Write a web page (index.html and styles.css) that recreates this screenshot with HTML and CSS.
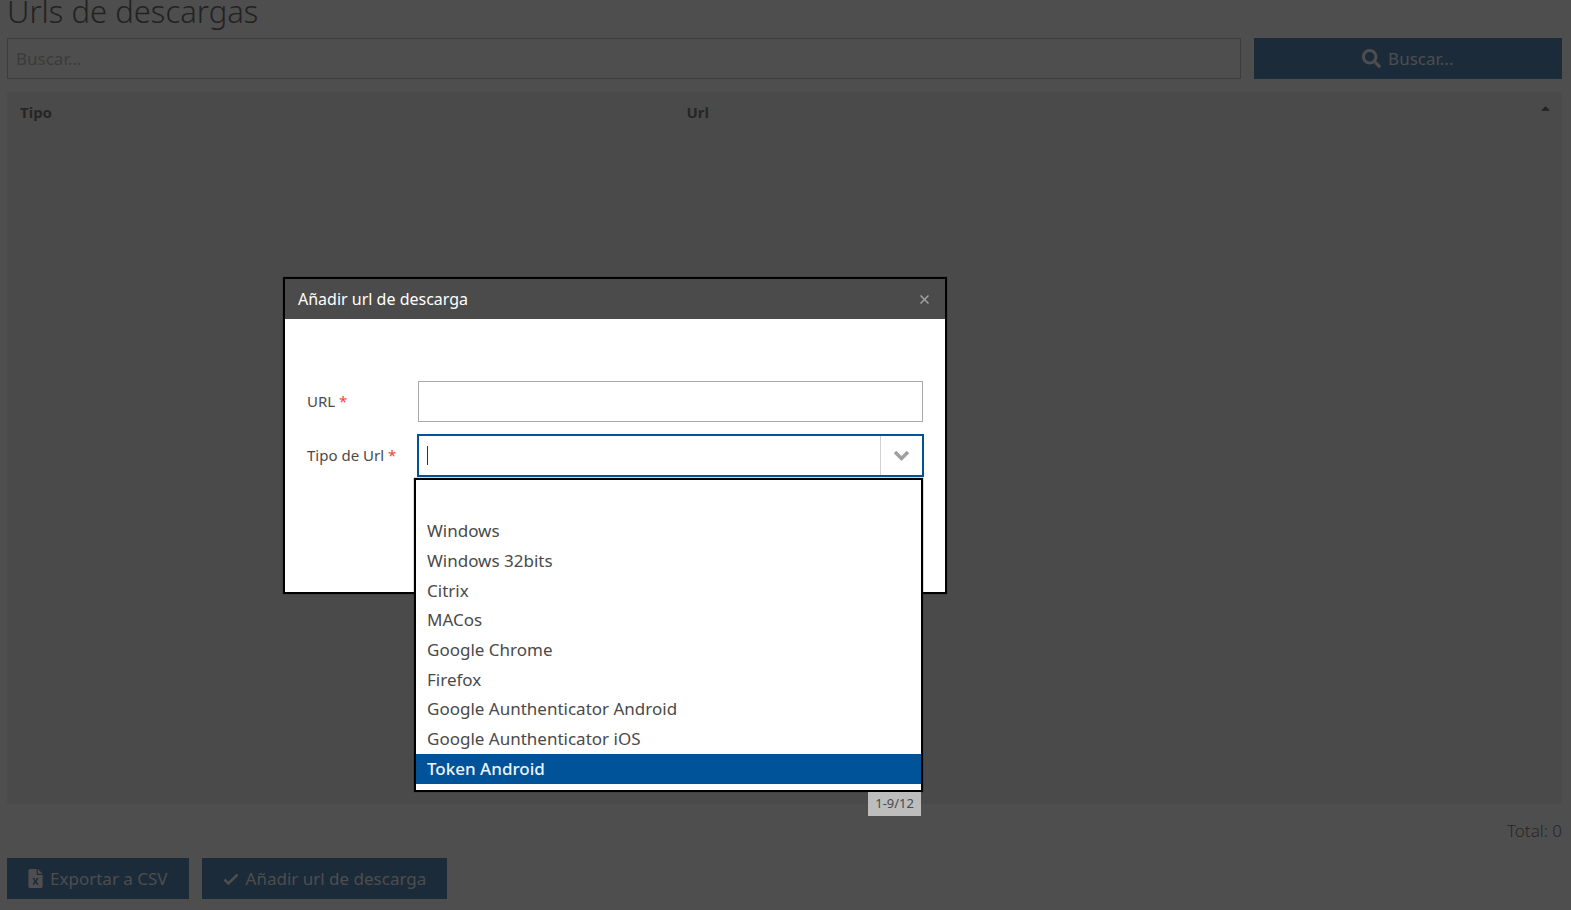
FILE: index.html
```html
<!DOCTYPE html>
<html lang="es">
<head>
<meta charset="utf-8">
<title>Urls de descargas</title>
<link rel="stylesheet" href="styles.css">
</head>
<body>
<main class="page">
  <h1 class="title">Urls de descargas</h1>
  <form class="search">
    <input class="search-input" type="search" placeholder="Buscar..." aria-label="Buscar">
    <button class="btn" type="button">
      <svg class="icon-search" viewBox="0 0 512 512" aria-hidden="true"><path d="M505 443L405 343c-4-4-11-7-17-7h-16c28-35 44-80 44-128C416 93 323 0 208 0S0 93 0 208s93 208 208 208c48 0 93-16 128-44v16c0 6 3 13 7 17l100 100c9 9 24 9 34 0l28-28c9-10 9-25 0-34zM208 336c-71 0-128-57-128-128S137 80 208 80s128 57 128 128-57 128-128 128z"/></svg>
      Buscar...
    </button>
  </form>
  <section class="grid">
    <table class="grid-table">
      <thead>
        <tr><th class="col-type" scope="col">Tipo</th><th scope="col" aria-sort="ascending"><span class="sortable">Url<svg class="icon-sort" viewBox="0 0 10 5" aria-hidden="true"><path d="M0 5L5 0l5 5z"/></svg></span></th></tr>
      </thead>
    </table>
  </section>
  <p class="total">Total: 0</p>
  <footer class="actions">
    <button class="btn" type="button">
      <svg class="icon-file" viewBox="0 0 384 512" aria-hidden="true"><path fill-rule="evenodd" d="M48 0h176v136c0 13 11 24 24 24h136v304c0 26-22 48-48 48H48c-26 0-48-22-48-48V48C0 22 22 0 48 0zM256 0l128 128H256zM108 240l56 92-56 92h48l36-62 36 62h48l-56-92 56-92h-48l-36 62-36-62z"/></svg>
      Exportar a CSV
    </button>
    <button class="btn" type="button">
      <svg class="icon-check" viewBox="0 0 16 12" aria-hidden="true"><path d="M1.500 6.500L5.500 10.500 14.500 1.500"/></svg>
      Añadir url de descarga
    </button>
  </footer>
</main>

<div class="dialog" role="dialog" aria-labelledby="dialog-title">
  <header class="dialog-header">
    <h2 class="dialog-title" id="dialog-title">Añadir url de descarga</h2>
    <button class="close" type="button" aria-label="Cerrar"><svg class="icon-close" viewBox="0 0 9 9" aria-hidden="true"><path d="M.5.5l8 8M8.500.5l-8 8"/></svg></button>
  </header>
  <form class="dialog-form">
    <label class="label" for="url">URL <span class="required">*</span></label>
    <input class="field" id="url" type="text">
    <label class="label" for="type">Tipo de Url <span class="required">*</span></label>
    <div class="combo">
      <input class="combo-input" id="type" type="text" role="combobox" aria-expanded="true" aria-controls="type-list">
      <span class="caret"></span>
      <button class="combo-button" type="button" aria-label="Abrir lista"><svg class="icon-chevron" viewBox="0 0 17 11" aria-hidden="true"><path d="M2 2l6.500 6.500L15 2"/></svg></button>
      <div class="popup">
        <ul class="options" id="type-list" role="listbox">
          <li class="option" role="option">Windows</li>
          <li class="option" role="option">Windows 32bits</li>
          <li class="option" role="option">Citrix</li>
          <li class="option" role="option">MACos</li>
          <li class="option" role="option">Google Chrome</li>
          <li class="option" role="option">Firefox</li>
          <li class="option" role="option">Google Aunthenticator Android</li>
          <li class="option" role="option">Google Aunthenticator iOS</li>
          <li class="option selected" role="option" aria-selected="true">Token Android</li>
        </ul>
        <span class="range">1-9/12</span>
      </div>
    </div>
  </form>
</div>
</body>
</html>
```

FILE: styles.css
```css
* { box-sizing: border-box; }

body {
  margin: 0;
  background: #4e4e4e;
  color: #262626;
  font-family: "Noto Sans", "Open Sans", sans-serif;
  font-size: 17px;
  overflow: hidden;
}

button, input { font: inherit; border-radius: 0; }

.page {
  display: flex;
  flex-direction: column;
  height: 100vh;
  padding: 0 9px 11px 7px;
}

.title {
  margin: -14px 0 2px;
  font-size: 31px;
  font-weight: 300;
  line-height: 50px;
  color: #222;
}

.search {
  display: grid;
  grid-template-columns: 4fr 1fr;
  gap: 13px;
}

.search-input {
  min-width: 0;
  height: 41px;
  padding: 0 8px;
  border: 1px solid #3d3d3d;
  background: transparent;
  color: #262626;
  appearance: none;
}

.search-input::placeholder { color: #3b3b3b; opacity: 1; }

.btn {
  display: flex;
  align-items: center;
  justify-content: center;
  gap: 7px;
  height: 41px;
  padding: 0 21px;
  border: 0;
  background: #1c2b3a;
  color: #4e4e4e;
}

.btn svg { fill: currentColor; }
.icon-search { width: 19px; height: 19px; }
.icon-file { width: 15px; height: 19px; }
.btn .icon-check { width: 16px; height: 12px; fill: none; stroke: currentColor; stroke-width: 2.500; }

.grid {
  flex: 1;
  margin-top: 13px;
  background: #4a4a4a;
}

.grid-table { width: 100%; border-collapse: collapse; table-layout: fixed; }
.grid-table th { padding: 8px 12px 8px 13px; font-size: 15px; line-height: 24px; text-align: left; }
.col-type { width: calc(100% * 3 / 7); }
.sortable { display: flex; justify-content: space-between; }
.icon-sort { width: 9px; height: 5px; margin-top: 6px; fill: #222; }

.total { margin: 14px 0 15px; line-height: 25px; text-align: right; font-weight: 300; }
.actions { display: flex; gap: 13px; }

.dialog {
  position: absolute;
  top: 277px;
  left: 283px;
  width: 664px;
  height: 317px;
  border: 2px solid #000;
  background: #fff;
  color: #4a4a4a;
  box-shadow: 0 0 1px #222;
}

.dialog-header {
  display: flex;
  align-items: center;
  justify-content: space-between;
  height: 40px;
  padding: 0 13px;
  background: #4b4b4b;
}

.dialog-title { margin: 0; font-size: 16px; font-weight: 400; color: #fff; }

.close {
  display: flex;
  padding: 3px;
  border: 0;
  background: none;
}

.icon-close { width: 9px; height: 9px; fill: none; stroke: #a0a0a0; stroke-width: 1.500; }

.dialog-form {
  display: grid;
  grid-template-columns: 110px 1fr;
  align-items: center;
  row-gap: 13px;
  padding: 62px 22px 0;
}

.label { padding-bottom: 2px; font-size: 15px; }
.required { color: #f44336; }

.field {
  min-width: 0;
  height: 41px;
  margin-left: 1px;
  padding: 0 8px;
  border: 1px solid #aaa;
  background: #fff;
}

.combo {
  position: relative;
  display: flex;
  height: 43px;
  margin: -1px -1px 0 0;
  border: 2px solid #005299;
}

.combo-input { flex: 1; min-width: 0; padding: 0 8px; border: 0; background: none; }

.caret {
  position: absolute;
  top: 10px;
  left: 8px;
  width: 1px;
  height: 19px;
  background: #333;
}

.combo-button {
  display: flex;
  align-items: center;
  justify-content: center;
  width: 42px;
  padding: 0;
  border: 0;
  border-left: 1px solid #d0d0d0;
  background: none;
}

.icon-chevron { width: 17px; height: 11px; fill: none; stroke: #a0a0a0; stroke-width: 3.500; }

.popup {
  position: absolute;
  top: 42px;
  left: -5px;
  right: -1px;
  border: 2px solid #000;
  background: #fff;
  box-shadow: 0 0 1px #222;
}

.options {
  display: grid;
  grid-template-rows: repeat(9, 1fr);
  height: 310px;
  margin: 0;
  padding: 37px 0 6px;
  list-style: none;
}

.option { display: flex; align-items: center; padding: 0 11px 2px; }
.selected { background: #005299; color: #f0f4f8; font-weight: 500; }

.range {
  position: absolute;
  top: 100%;
  right: 0;
  margin-top: 2px;
  padding: 0 7px 2px;
  background: #bdbdbd;
  font-size: 13px;
  line-height: 22px;
}
```
